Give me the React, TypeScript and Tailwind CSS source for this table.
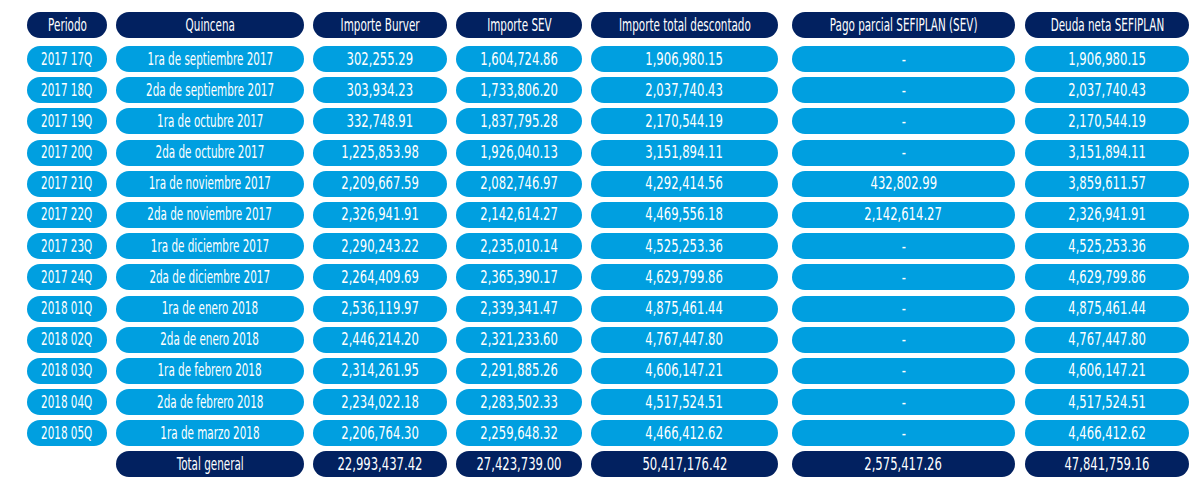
const cols = [
  "w-[80px] ml-[27px]",
  "w-[188px] ml-[9px]",
  "w-[134px] ml-[9px]",
  "w-[126px] ml-[9px]",
  "w-[187px] ml-[9px]",
  "w-[223px] ml-[14px]",
  "w-[164px] ml-[10px]",
];

const headers = [
  "Periodo",
  "Quincena",
  "Importe Burver",
  "Importe SEV",
  "Importe total descontado",
  "Pago parcial SEFIPLAN (SEV)",
  "Deuda neta SEFIPLAN",
];

const rows = [
  ["2017 17Q", "1ra de septiembre 2017", "302,255.29", "1,604,724.86", "1,906,980.15", "-", "1,906,980.15"],
  ["2017 18Q", "2da de septiembre 2017", "303,934.23", "1,733,806.20", "2,037,740.43", "-", "2,037,740.43"],
  ["2017 19Q", "1ra de octubre 2017", "332,748.91", "1,837,795.28", "2,170,544.19", "-", "2,170,544.19"],
  ["2017 20Q", "2da de octubre 2017", "1,225,853.98", "1,926,040.13", "3,151,894.11", "-", "3,151,894.11"],
  ["2017 21Q", "1ra de noviembre 2017", "2,209,667.59", "2,082,746.97", "4,292,414.56", "432,802.99", "3,859,611.57"],
  ["2017 22Q", "2da de noviembre 2017", "2,326,941.91", "2,142,614.27", "4,469,556.18", "2,142,614.27", "2,326,941.91"],
  ["2017 23Q", "1ra de diciembre 2017", "2,290,243.22", "2,235,010.14", "4,525,253.36", "-", "4,525,253.36"],
  ["2017 24Q", "2da de diciembre 2017", "2,264,409.69", "2,365,390.17", "4,629,799.86", "-", "4,629,799.86"],
  ["2018 01Q", "1ra de enero 2018", "2,536,119.97", "2,339,341.47", "4,875,461.44", "-", "4,875,461.44"],
  ["2018 02Q", "2da de enero 2018", "2,446,214.20", "2,321,233.60", "4,767,447.80", "-", "4,767,447.80"],
  ["2018 03Q", "1ra de febrero 2018", "2,314,261.95", "2,291,885.26", "4,606,147.21", "-", "4,606,147.21"],
  ["2018 04Q", "2da de febrero 2018", "2,234,022.18", "2,283,502.33", "4,517,524.51", "-", "4,517,524.51"],
  ["2018 05Q", "1ra de marzo 2018", "2,206,764.30", "2,259,648.32", "4,466,412.62", "-", "4,466,412.62"],
];

const total = ["", "Total general", "22,993,437.42", "27,423,739.00", "50,417,176.42", "2,575,417.26", "47,841,759.16"];

// the original uses a condensed face; squeeze DejaVu Condensed to match
const isAmount = (t: string) => /^[\d,.\-]+$/.test(t);

function Cell({ text, col, dark }: { text: string; col: number; dark?: boolean }) {
  return (
    <div
      className={`${cols[col]} h-[26px] shrink-0 rounded-full flex items-center justify-center text-white text-[17px] leading-none ${
        dark ? "bg-[#022160]" : "bg-[#009fe0]"
      }`}
    >
      <span className={`inline-block whitespace-nowrap ${isAmount(text) ? "scale-x-[0.76]" : "scale-x-[0.68]"}`}>
        {text}
      </span>
    </div>
  );
}

export default function App() {
  return (
    <div
      className="w-[1200px] h-[492px] bg-white flex flex-col pt-[12px]"
      style={{ fontFamily: '"DejaVu Sans Condensed", "DejaVu Sans", sans-serif' }}
    >
      <div className="flex mb-[8px]">
        {headers.map((h, i) => (
          <Cell key={i} text={h} col={i} dark />
        ))}
      </div>
      <div className="flex flex-col gap-y-[5.2px]">
        {rows.map((r, ri) => (
          <div key={ri} className="flex">
            {r.map((c, ci) => (
              <Cell key={ci} text={c} col={ci} />
            ))}
          </div>
        ))}
        <div className="flex">
          <div className={`${cols[0]} h-[26px] shrink-0`} />
          {total.slice(1).map((c, ci) => (
            <Cell key={ci} text={c} col={ci + 1} dark />
          ))}
        </div>
      </div>
    </div>
  );
}
